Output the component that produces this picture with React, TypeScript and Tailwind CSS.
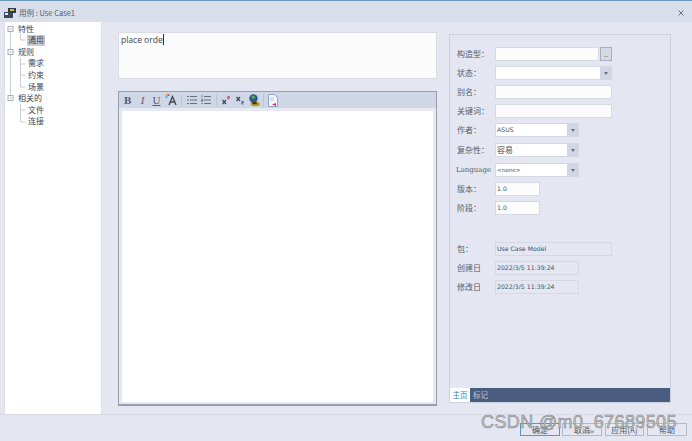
const cjk = "font-['Noto_Sans_CJK_SC','Noto_Sans',sans-serif]";

function TreeRow({
	label,
	kind,
	trunk,
	selected,
}: {
	label: string;
	kind: "root" | "mid" | "last";
	trunk?: "full" | "top" | "bottom";
	selected?: boolean;
}) {
	return (
		<div className="flex h-[11.6px] items-center">
			<svg width="21" height="12" className="shrink-0" viewBox="0 0 21 12">
				<g fill="none" stroke="#c9ccd5" strokeWidth="1">
					{trunk === "full" && <path d="M5.5 0v12" />}
					{trunk === "top" && <path d="M5.5 0v3" />}
					{trunk === "bottom" && <path d="M5.5 9v3" />}
					{kind === "mid" && <path d="M15.5 0v12M15.5 6h5" />}
					{kind === "last" && <path d="M15.5 0v6h5" />}
				</g>
				{kind === "root" && (
					<g fill="#fff" stroke="#a9adb8" strokeWidth="1">
						<rect x="3" y="3.5" width="5" height="5" />
						<path d="M4.5 6h2" />
					</g>
				)}
			</svg>
			<span
				className={`${kind === "root" ? "-ml-[9px]" : "ml-px"} px-[1px] text-[8px] leading-[10.5px] text-[#3d4452] ${selected ? "bg-[#c6ccd8]" : ""}`}
			>
				{label}
			</span>
		</div>
	);
}

function Label({ children, mono }: { children: React.ReactNode; mono?: boolean }) {
	return (
		<span
			className={`w-[38px] shrink-0 whitespace-nowrap text-[#565c6a] ${mono ? "-ml-[1px] mr-[1px] font-['DejaVu_Serif',serif] text-[7px]" : "text-[8px]"}`}
		>
			{children}
		</span>
	);
}

function Field({ w, value, readOnly }: { w: string; value?: string; readOnly?: boolean }) {
	return (
		<div
			className={`flex h-[14px] items-center border border-[#d6d9e2] pl-[1px] font-['DejaVu_Sans',sans-serif] text-[6.2px] text-[#4a5160] ${w} ${readOnly ? "bg-[#e4e7f1]" : "bg-[#fcfcfd]"}`}
		>
			{value}
		</div>
	);
}

function Combo({ w, value, big, small }: { w: string; value?: string; big?: boolean; small?: boolean }) {
	return (
		<div className={`flex h-[14px] items-center justify-between border border-[#d6d9e2] bg-white pl-[1px] ${w}`}>
			<span
				className={`text-[#4a5160] ${big ? "text-[8px]" : small ? "font-['DejaVu_Sans',sans-serif] text-[5.6px]" : "font-['DejaVu_Sans',sans-serif] text-[6.2px]"}`}
			>
				{value}
			</span>
			<span className="flex h-full w-[11px] items-center justify-center bg-[#d0d6e4]">
				<span className="border-x-[2px] border-t-[3px] border-x-transparent border-t-[#6a7080]" />
			</span>
		</div>
	);
}

function Row({ label, mono, mt, children }: { label: string; mono?: boolean; mt: string; children: React.ReactNode }) {
	return (
		<div className={`flex h-[14px] items-center ${mt}`}>
			<Label mono={mono}>{label}</Label>
			{children}
		</div>
	);
}

function Divider({ ml }: { ml: string }) {
	return <span className={`h-[13px] w-px bg-[#bdc4d4] ${ml}`} />;
}

function Toolbar() {
	return (
		<div className="flex h-[16px] items-center bg-[#cfd6e5] pl-[5px] text-[#565c6a]">
			<span className="w-[7px] text-center font-['Liberation_Serif',serif] text-[11px] font-bold leading-none">B</span>
			<span className="ml-[9px] w-[5px] text-center font-['Liberation_Serif',serif] text-[11px] italic leading-none">I</span>
			<span className="ml-[7px] w-[9px] text-center font-['Liberation_Serif',serif] text-[11px] leading-none underline">U</span>
			<svg width="12" height="12" viewBox="0 0 12 12" className="ml-[4px]">
				<rect x="0.5" y="0" width="2" height="2" fill="#e0c020" />
				<rect x="2.5" y="0" width="2" height="2" fill="#e040c0" />
				<rect x="0.5" y="2" width="2" height="2" fill="#40c0e0" />
				<path d="M4 11L7.5 2.5L11 11M5.5 8h4" fill="none" stroke="#414a5c" strokeWidth="1.4" />
			</svg>
			<Divider ml="ml-[4px]" />
			<svg width="10" height="10" viewBox="0 0 10 10" fill="none" stroke="#6a7080" className="ml-[5px]">
				<path d="M3 1.5h7M3 5h7M3 8.5h7" />
				<path d="M0 1.5h2M0 5h2M0 8.5h2" />
			</svg>
			<svg width="10" height="10" viewBox="0 0 10 10" fill="none" stroke="#6a7080" className="ml-[4px]">
				<path d="M3 1.5h7M3 5h7M3 8.5h7" />
				<path d="M1 0v3M0 4.5h2v1h-2v1h2M0 8.5h2" strokeWidth="0.7" />
			</svg>
			<Divider ml="ml-[5px]" />
			<svg width="8" height="9" viewBox="0 0 8 9" fill="none" className="ml-[5px]">
				<path d="M0.5 4l3.5 4M4 4l-3.5 4" stroke="#3f4654" strokeWidth="1.2" />
				<path d="M5.5 0.5h2v1.2h-2v1.2h2" stroke="#c04050" strokeWidth="0.8" />
			</svg>
			<svg width="8" height="9" viewBox="0 0 8 9" fill="none" className="ml-[6px]">
				<path d="M0.5 1l3.5 4M4 1l-3.5 4" stroke="#3f4654" strokeWidth="1.2" />
				<path d="M5.5 5.5h2v1.2h-2v1.2h2" stroke="#3050c0" strokeWidth="0.8" />
			</svg>
			<svg width="12" height="13" viewBox="0 0 12 13" className="ml-[4px]">
				<circle cx="5.5" cy="4.5" r="4.2" fill="#27598c" />
				<path d="M3 2.5l3-1 1.5 2-2.5 2z" fill="#5aa65a" />
				<ellipse cx="7.2" cy="10" rx="4.6" ry="2.2" fill="#b8941c" />
				<ellipse cx="6.5" cy="9" rx="2.5" ry="1.2" fill="#4a3a10" />
			</svg>
			<Divider ml="ml-[3px]" />
			<svg width="10" height="13" viewBox="0 0 10 13" className="ml-[4px]">
				<path d="M0.5 0.5h6l3 3v9h-9z" fill="#f5f6fa" stroke="#8fa2c4" />
				<path d="M4 10.5l4-1.5v3z" fill="#d8304a" />
				<path d="M2 4h4M2 6h4" stroke="#b8c2d8" />
			</svg>
		</div>
	);
}

function FootButton({ children, primary, w }: { children: React.ReactNode; primary?: boolean; w: string }) {
	return (
		<button
			className={`h-[13px] border text-[8px] leading-none text-[#4a5160] ${w} ${primary ? "border-[#5f93b8]" : "border-[#b6bac6]"}`}
		>
			{children}
		</button>
	);
}

export default function App() {
	return (
		<div className={`relative flex h-[441px] w-[692px] flex-col overflow-hidden bg-[#e4e7f1] ${cjk}`}>
			<div className="h-px bg-[#6f9cc0]" />
			<div className="flex h-[21px] items-center bg-[#d8deea] pl-[4px] pr-[8px] pt-[3px]">
				<svg width="12" height="11" viewBox="0 0 12 11">
					<rect x="0" y="4" width="9" height="6" fill="#3d4a5e" />
					<rect x="1" y="5" width="3" height="2" fill="#e8ecf4" />
					<rect x="4" y="0" width="8" height="5" fill="#2f3a4c" />
					<rect x="6" y="1" width="4" height="2" fill="#d8b840" />
				</svg>
				<span className="ml-[3px] text-[7.5px] text-[#565c6a]">用例 : Use Case1</span>
				<svg width="6" height="6" viewBox="0 0 6 6" className="ml-auto" fill="none" stroke="#6a7080">
					<path d="M0.5 0.5l5 5M5.5 0.5l-5 5" />
				</svg>
			</div>

			<div className="flex h-[393px] border-b border-[#d8dbe5] pl-[4px]">
				<div className="h-[392px] w-[98px] shrink-0 border-x border-[#dcdfe8] bg-white pt-px">
					<TreeRow label="特性" kind="root" trunk="bottom" />
					<TreeRow label="通用" kind="last" trunk="full" selected />
					<TreeRow label="规则" kind="root" trunk="full" />
					<TreeRow label="需求" kind="mid" trunk="full" />
					<TreeRow label="约束" kind="mid" trunk="full" />
					<TreeRow label="场景" kind="last" trunk="full" />
					<TreeRow label="相关的" kind="root" trunk="top" />
					<TreeRow label="文件" kind="mid" />
					<TreeRow label="连接" kind="last" />
				</div>

				<div className="ml-[16px] w-[319px] shrink-0 pt-[10px]">
					<div className="h-[47px] border border-[#d9dce5] bg-[#fbfbfc] pl-[2px] pt-px font-['Open_Sans',sans-serif] text-[8.5px] leading-[12px] text-[#3d4452]">
						place orde<span className="border-r border-[#22304a]" />
					</div>
					<div className="mt-[12px] flex h-[315px] flex-col border border-b-2 border-[#9a9eac]">
						<Toolbar />
						<div className="flex-1 bg-[#e6e9f2] px-[3px] pb-[2px] pt-[3px]">
							<div className="h-full bg-white" />
						</div>
					</div>
				</div>

				<div className="ml-[12px] mt-[12px] flex h-[369px] w-[222px] shrink-0 flex-col border border-[#ccd1de] pl-[7px] pt-[12px] text-[8px]">
					<Row label="构造型：" mt="">
						<Field w="w-[104px]" />
						<span className="ml-px flex h-[14px] w-[12px] items-center justify-center border border-[#a9aebc] bg-[#d4d9e5] text-[7px] leading-none text-[#4a5160]">
							..
						</span>
					</Row>
					<Row label="状态：" mt="mt-[5px]">
						<Combo w="w-[117px]" />
					</Row>
					<Row label="别名：" mt="mt-[5px]">
						<Field w="w-[117px]" />
					</Row>
					<Row label="关键词：" mt="mt-[5px]">
						<Field w="w-[117px]" />
					</Row>
					<Row label="作者：" mt="mt-[5px]">
						<Combo w="w-[84px]" value="ASUS" />
					</Row>
					<Row label="复杂性：" mt="mt-[6px]">
						<Combo w="w-[84px]" value="容易" big />
					</Row>
					<Row label="Language" mono mt="mt-[6px]">
						<Combo w="w-[84px]" value="<none>" small />
					</Row>
					<Row label="版本：" mt="mt-[5px]">
						<Field w="w-[45px]" value="1.0" />
					</Row>
					<Row label="阶段：" mt="mt-[5px]">
						<Field w="w-[45px]" value="1.0" />
					</Row>
					<Row label="包：" mt="mt-[27px]">
						<Field w="w-[117px]" value="Use Case Model" readOnly />
					</Row>
					<Row label="创建日" mt="mt-[5px]">
						<Field w="w-[84px]" value="2022/3/5 11:39:24" readOnly />
					</Row>
					<Row label="修改日" mt="mt-[5px]">
						<Field w="w-[84px]" value="2022/3/5 11:39:24" readOnly />
					</Row>
					<div className="-ml-[7px] mt-auto flex h-[14px] items-center bg-[#4a5d80] text-[7.5px]">
						<span className="flex h-full w-[20px] items-center justify-center bg-white text-[#2f7fb0]">主页</span>
						<span className="ml-[3px] text-[#bcc5d8]">标记</span>
					</div>
				</div>
			</div>

			<div className="flex flex-1 justify-end pr-[5px] pt-[8px]">
				<FootButton primary w="w-[40px]">确定</FootButton>
				<FootButton w="ml-[2px] w-[40px]">取消</FootButton>
				<FootButton w="ml-[3px] w-[39px]">应用(A)</FootButton>
				<FootButton w="ml-[3px] w-[40px]">帮助</FootButton>
			</div>

			{/* watermark sits over the buttons */}
			<div className="absolute left-[481px] top-[412px] font-['Liberation_Sans',sans-serif] text-[18px] leading-[20px] tracking-[0.38px] text-[#c4c4c4] [-webkit-text-stroke:0.5px_#7d7d7d]">
				CSDN @m0_67689505
			</div>
		</div>
	);
}
